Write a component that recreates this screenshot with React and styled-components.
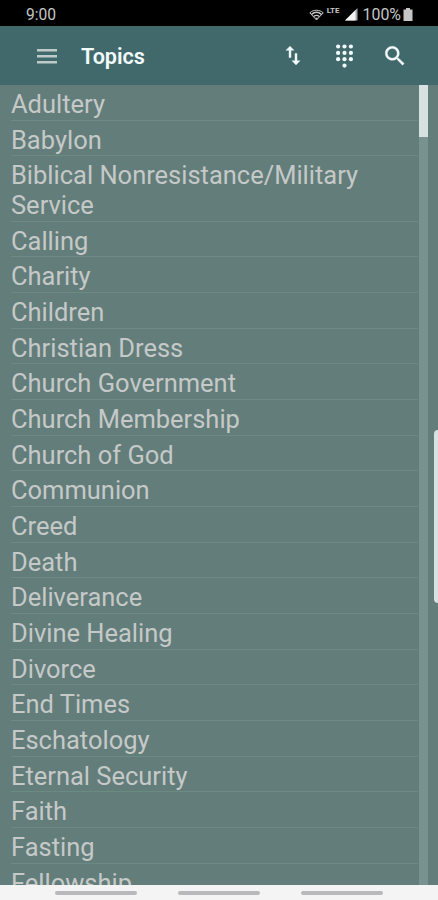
import React from 'react'
import styled, { createGlobalStyle } from 'styled-components';

const GlobalStyle = createGlobalStyle`
body {
  margin: 0;
  font-family: Roboto, "Noto Sans", sans-serif;
}
`

const Screen = styled.div`
display: flex;
flex-direction: column;
position: relative;
width: 438px;
height: 900px;
overflow: hidden;
background: #637d7b;
`

const StatusBar = styled.div`
display: flex;
align-items: center;
flex: none;
box-sizing: border-box;
height: 26px;
padding: 3px 25px 0 26px;
background: #000;
color: #c6c6c6;
`

const Clock = styled.span`
font-size: 15.6px;
line-height: 20px;
margin-right: auto;
`

const Network = styled.span`
font-size: 8px;
font-weight: 700;
line-height: 8px;
margin: 0 5px 7px 3px;
`

const Battery = styled.span`
font-size: 15.9px;
line-height: 20px;
margin: 0 2px 0 5px;
`

const AppBar = styled.header`
display: flex;
align-items: center;
flex: none;
box-sizing: border-box;
height: 59px;
padding: 0 30px 0 34px;
background: #41696c;
color: #f2fafb;
`

const Title = styled.h1`
flex: 1;
margin: 3px 0 0 21px;
font-size: 21.6px;
font-weight: 600;
line-height: 28px;
`

const IconButton = styled.button`
display: flex;
padding: 0;
border: 0;
background: none;
color: ${({ $muted }) => ($muted ? '#bccbc8' : 'inherit')};
margin-left: ${({ $gap }) => $gap || 0}px;
`

const Content = styled.main`
display: flex;
flex: 1;
min-height: 0;
overflow: hidden;
`

const TopicList = styled.ul`
flex: 1;
margin: 0 1px 0 11px;
padding: 0;
list-style: none;
`

const Topic = styled.li`
padding: 4.9px 0 0.1px;
border-bottom: 1px solid #6b8a82;
color: #c5c9c7;
font-size: 25.47px;
line-height: 29.69px;
`

const ScrollTrack = styled.div`
width: 9px;
margin-right: 10px;
background: #78928f;
`

const ScrollThumb = styled.div`
height: 52px;
background: #d6e1e0;
`

const EdgeHandle = styled.div`
position: absolute;
top: 430px;
right: 0;
width: 4px;
height: 173px;
border-radius: 4px 0 0 4px;
background: #d7e3e2;
`

const NavBar = styled.nav`
display: flex;
justify-content: center;
flex: none;
box-sizing: border-box;
height: 15.5px;
padding-top: 6px;
gap: 41px;
background: #f4f4f5;
`

const NavHint = styled.span`
width: 82px;
height: 4px;
border-radius: 2px;
background: #b9b9bb;
`

const topics = [
  'Adultery',
  'Babylon',
  'Biblical Nonresistance/Military Service',
  'Calling',
  'Charity',
  'Children',
  'Christian Dress',
  'Church Government',
  'Church Membership',
  'Church of God',
  'Communion',
  'Creed',
  'Death',
  'Deliverance',
  'Divine Healing',
  'Divorce',
  'End Times',
  'Eschatology',
  'Eternal Security',
  'Faith',
  'Fasting',
  'Fellowship',
]

const WifiIcon = () => (
  <svg width="15" height="12" viewBox="0 0 15 12" fill="none" stroke="#c6c6c6" strokeWidth="1.4">
    <path d="M.8 3.8C4.6.4 10.4.4 14.2 3.8L7.5 11Z" strokeWidth="1" />
    <path d="M2.5 5.4c3-2.5 7-2.5 10 0M4.6 7.5c1.8-1.4 4-1.4 5.8 0" />
    <path d="M6 8.8h3l-1.5 2z" fill="#c6c6c6" stroke="none" />
  </svg>
)

const SignalIcon = () => (
  <svg width="13" height="13" viewBox="0 0 13 13">
    <path d="M12.5 0v12.5H0z" fill="#a8a8a8" />
    <path d="M9 3.5v9H0z" fill="#f4f4f4" />
    <path d="M9 3.5 10.5 2v10.5H9z" fill="#f4f4f4" />
  </svg>
)

const BatteryIcon = () => (
  <svg width="10" height="13" viewBox="0 0 10 13" fill="#c6c6c6">
    <path d="M3 0h4v1.5h2.5V13H.5V1.5H3z" />
  </svg>
)

const MenuIcon = () => (
  <svg width="26" height="26" viewBox="0 0 26 26" fill="currentColor">
    <path d="M3 6h20v2.6H3zM3 12h20v2.4H3zM3 18h20v2.4H3z" />
  </svg>
)

const SortIcon = () => (
  <svg width="24" height="25" viewBox="0 0 24 24" preserveAspectRatio="none" fill="currentColor" stroke="currentColor" strokeWidth=".4">
    <path d="M9 3 5 7h3v7h2V7h3L9 3zm7 14v-7h-2v7h-3l4 4 4-4h-3z" />
  </svg>
)

const DialpadIcon = () => (
  <svg width="26" height="26" viewBox="0 0 26 26" fill="currentColor">
    {[3.5, 9.9, 16.2].map((y) =>
      [7.1, 13.5, 19.9].map((x) => <circle key={`${x}-${y}`} cx={x} cy={y} r="2.1" />)
    )}
    <circle cx="13.5" cy="22.6" r="2.1" />
  </svg>
)

const SearchIcon = () => (
  <svg width="26" height="26" viewBox="0 0 24 24" fill="currentColor" stroke="currentColor" strokeWidth=".3">
    <path d="M15.5 14h-.79l-.28-.27C15.41 12.59 16 11.11 16 9.5 16 5.91 13.09 3 9.5 3S3 5.91 3 9.5 5.91 16 9.5 16c1.61 0 3.09-.59 4.23-1.57l.27.28v.79l5 4.99L20.49 19l-4.99-5zm-6 0C7.01 14 5 11.99 5 9.5S7.01 5 9.5 5 14 7.01 14 9.5 11.99 14 9.5 14z" />
  </svg>
)

const App = () => {
  return (
    <Screen>
      <GlobalStyle />
      <StatusBar>
        <Clock>9:00</Clock>
        <WifiIcon />
        <Network>LTE</Network>
        <SignalIcon />
        <Battery>100%</Battery>
        <BatteryIcon />
      </StatusBar>
      <AppBar>
        <IconButton $muted aria-label="Menu"><MenuIcon /></IconButton>
        <Title>Topics</Title>
        <IconButton aria-label="Sort"><SortIcon /></IconButton>
        <IconButton $gap={26} aria-label="Keypad"><DialpadIcon /></IconButton>
        <IconButton $gap={25} aria-label="Search"><SearchIcon /></IconButton>
      </AppBar>
      <Content>
        <TopicList>
          {topics.map((topic) => (
            <Topic key={topic}>{topic}</Topic>
          ))}
        </TopicList>
        <ScrollTrack>
          <ScrollThumb />
        </ScrollTrack>
      </Content>
      <NavBar>
        <NavHint />
        <NavHint />
        <NavHint />
      </NavBar>
      <EdgeHandle />
    </Screen>
  )
}

export default App;
